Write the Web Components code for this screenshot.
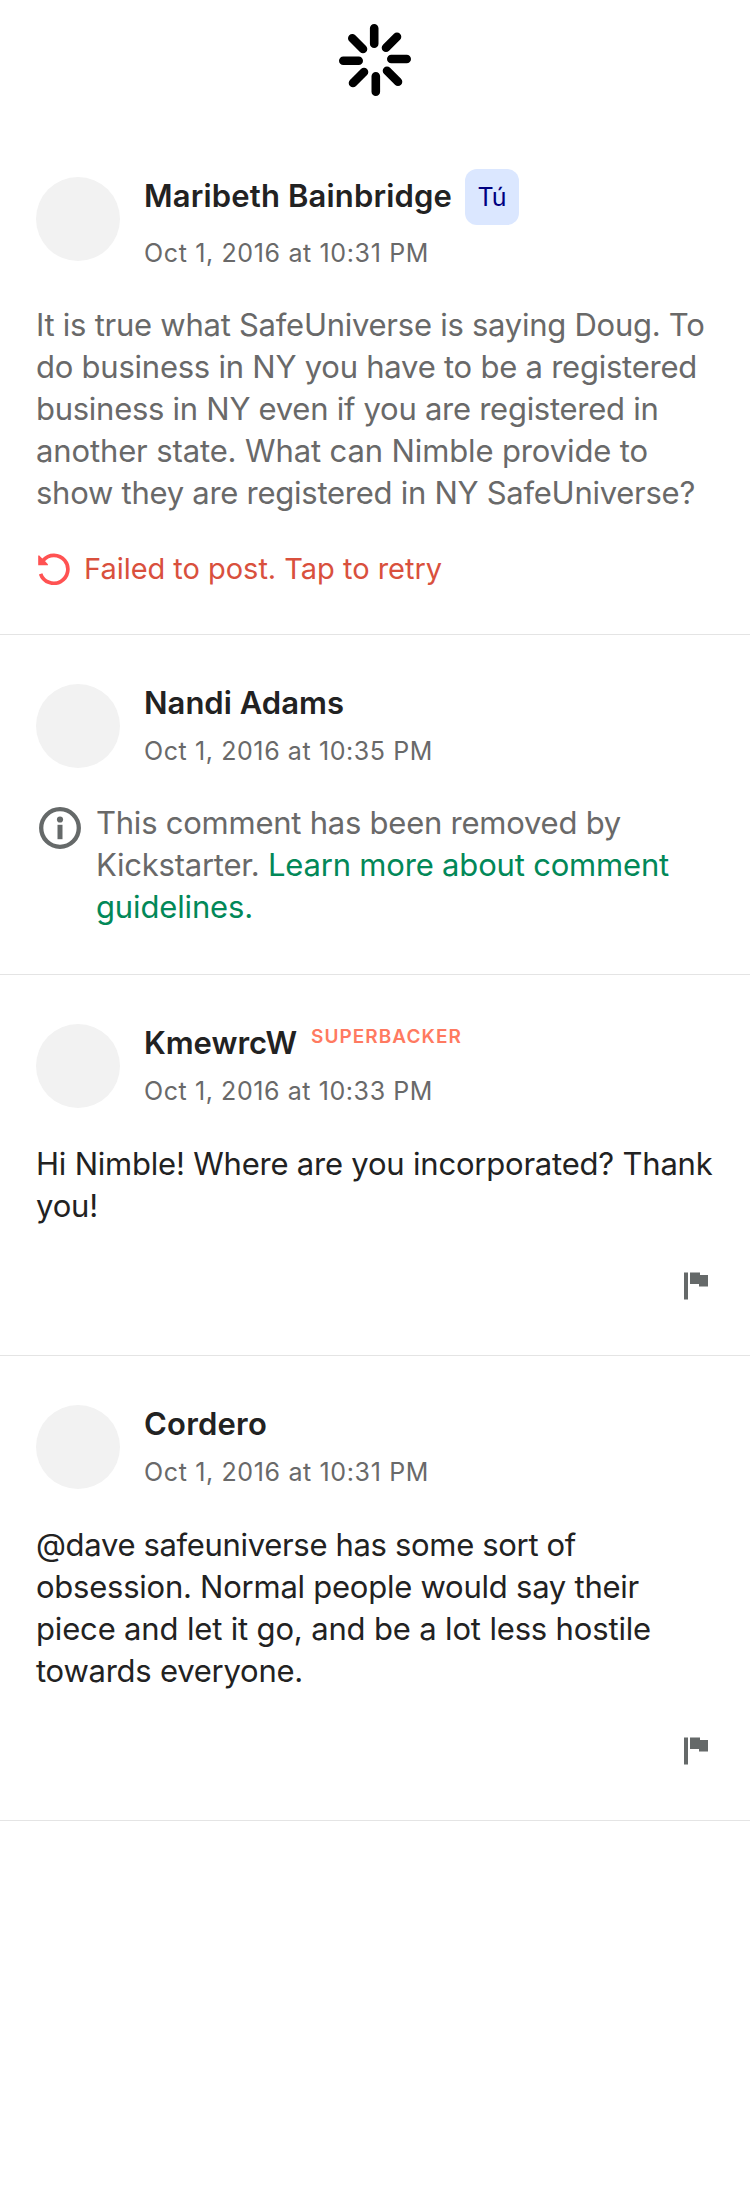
<!DOCTYPE html>
<html lang="en"><head><meta charset="utf-8"><title>Comments</title>
<style>
html,body{margin:0;background:#fff}
body{width:750px;min-height:2200px;font-family:Inter,"Liberation Sans",sans-serif;color:#222}
</style></head><body>
<comment-list></comment-list>
<script>
const shadow=(el,html)=>{const t=document.createElement('template');t.innerHTML=html;const r=el.attachShadow({mode:'open'});r.append(t.content.cloneNode(true));return r;};

// One line of text whose tracking is set so that it fills the advance in its "w" attribute.
customElements.define('text-line',class extends HTMLElement{
  connectedCallback(){
    if(this.shadowRoot)return;
    const r=shadow(this,`<style>:host{display:block;white-space:pre;height:var(--lh,42px);line-height:var(--lh,42px)}span{display:inline-block}</style><span><slot></slot></span>`);
    const s=r.querySelector('span'),w=+this.getAttribute('w');
    if(w){const n=this.textContent.length;this.style.letterSpacing='0px';this.style.letterSpacing=((w-s.getBoundingClientRect().width)/n).toFixed(3)+'px';}
  }
});
customElements.define('loading-spinner',class extends HTMLElement{
  connectedCallback(){
    shadow(this,`<style>:host{display:flex;justify-content:center;height:127px}svg{display:block}</style>
    <svg width="110" height="127" viewBox="320 0 110 127" stroke="#000" stroke-width="8.6" stroke-linecap="round">
    <path d="M374.2 28.3v15.4M397 36.7 386 47.7M406.7 59H391.300M398 81.700 387 70.700M375.800 91.700V76.300M353 83 364 72M343.300 60.700H358.700M352.300 38.300 363 49"/></svg>`);
  }
});
customElements.define('user-avatar',class extends HTMLElement{
  connectedCallback(){shadow(this,`<style>:host{display:block;width:84px;height:84px;border-radius:50%;background:#f2f2f2;flex:none}</style>`);}
});
customElements.define('you-badge',class extends HTMLElement{
  connectedCallback(){shadow(this,`<style>:host{--lh:56px;display:flex;justify-content:center;box-sizing:border-box;width:54px;height:56px;margin-left:13px;border-radius:12px;background:#dbe7ff;color:#000080;font-size:25px;font-weight:400}</style><slot></slot>`);}
});
customElements.define('super-badge',class extends HTMLElement{
  connectedCallback(){shadow(this,`<style>:host{--lh:24px;display:block;margin:0 0 13px 14px;color:#ff7a61;font-size:19px;font-weight:600}</style><slot></slot>`);}
});
customElements.define('comment-icon',class extends HTMLElement{
  connectedCallback(){
    const icons={
      flag:`<svg width="24" height="28" viewBox="0 0 24 28" fill="#656969"><path d="M0 .4h4v27H0zM6 .4h10V3h8v11.500h-9V12H6z"/></svg>`,
      info:`<svg width="42" height="42" viewBox="0 0 42 42" fill="none"><circle cx="21" cy="21" r="18.800" stroke="#656969" stroke-width="4.300"/><circle cx="21" cy="12.500" r="3.100" fill="#656969"/><path d="M18.500 17.800h5v14.400h-5z" fill="#656969"/></svg>`,
      retry:`<svg width="32" height="32" viewBox="0 0 32 32" fill="none"><path d="M5.200 7.200A14 14 0 1 1 2.600 20.800" stroke="#ff5252" stroke-width="3.700"/><path d="M.2 2.600V12.200H9.900V11.200L7.600 8.800 4 5.200 1.300 2.600z" fill="#ff5252"/></svg>`
    };
    shadow(this,`<style>:host{display:block;flex:none}svg{display:block}</style>${icons[this.getAttribute('name')]}`);
  }
});
customElements.define('comment-card',class extends HTMLElement{
  connectedCallback(){
    shadow(this,`<style>
    :host{display:flex;flex-direction:column;box-sizing:border-box;border-bottom:1px solid #e4e4e4;padding:50px 36px 0}
    header{display:flex;gap:24px}
    .who{display:flex;flex-direction:column}
    .name{display:flex;align-items:center;height:56px;margin-top:-8px;font-size:31px;font-weight:600}
    .date{--lh:36px;font-size:25px;color:#696969;margin-top:10px}
    :host(:not([compact])) slot[name=name]::slotted(*){margin-bottom:2px}
    :host([compact]){padding-top:49px}
    :host([compact]) .name{height:42px;margin-top:-2px}
    :host([compact]) .date{margin-top:9px}
    .body{font-size:31px;margin-top:34px}
    :host([muted]) .body{color:#696969;margin-top:33px}
    .foot{flex:none}
    </style>
    <header><user-avatar></user-avatar><div class="who"><div class="name"><slot name="name"></slot><slot name="badge"></slot></div><div class="date"><slot name="date"></slot></div></div></header>
    <div class="body"><slot></slot></div><div class="foot"><slot name="foot"></slot></div>`);
  }
});
customElements.define('retry-row',class extends HTMLElement{
  connectedCallback(){shadow(this,`<style>:host{display:flex;align-items:center;gap:14px;margin:34px 0 0 2px;height:42px;color:#d9503d;font-size:29px}</style><comment-icon name="retry"></comment-icon><slot></slot>`);}
});
customElements.define('removed-note',class extends HTMLElement{
  connectedCallback(){shadow(this,`<style>:host{display:flex;margin-left:3px;gap:15px}comment-icon{margin-top:5px}</style><comment-icon name="info"></comment-icon><div><slot></slot></div>`);}
});
customElements.define('flag-row',class extends HTMLElement{
  connectedCallback(){shadow(this,`<style>:host{display:flex;justify-content:flex-end;margin:45px 6px 0 0}</style><comment-icon name="flag"></comment-icon>`);}
});
customElements.define('comment-list',class extends HTMLElement{
  connectedCallback(){shadow(this,`<style>
  :host{display:flex;flex-direction:column}
  .a{height:508px}.b{height:340px}.c{height:381px}.d{height:465px}
  .green{color:#028858}
  .split{display:flex}
  </style>
  <loading-spinner></loading-spinner>
  <comment-card class="a" muted>
    <text-line slot="name" w="308">Maribeth Bainbridge</text-line><you-badge slot="badge"><text-line w="29">Tú</text-line></you-badge>
    <text-line slot="date" w="285">Oct 1, 2016 at 10:31 PM</text-line>
    <text-line w="668.5">It is true what SafeUniverse is saying Doug. To</text-line>
    <text-line w="661">do business in NY you have to be a registered</text-line>
    <text-line w="622.5">business in NY even if you are registered in</text-line>
    <text-line w="612">another state. What can Nimble provide to</text-line>
    <text-line w="659">show they are registered in NY SafeUniverse?</text-line>
    <retry-row slot="foot"><text-line w="358">Failed to post. Tap to retry</text-line></retry-row>
  </comment-card>
  <comment-card class="b" muted compact>
    <text-line slot="name" w="200">Nandi Adams</text-line>
    <text-line slot="date" w="289">Oct 1, 2016 at 10:35 PM</text-line>
    <removed-note><text-line w="525">This comment has been removed by</text-line>
    <div class="split"><text-line w="172">Kickstarter. </text-line><text-line class="green" w="401">Learn more about comment</text-line></div>
    <text-line class="green" w="157">guidelines.</text-line></removed-note>
  </comment-card>
  <comment-card class="c" compact>
    <text-line slot="name" w="153">KmewrcW</text-line><super-badge slot="badge"><text-line w="151">SUPERBACKER</text-line></super-badge>
    <text-line slot="date" w="289">Oct 1, 2016 at 10:33 PM</text-line>
    <text-line w="676.5">Hi Nimble! Where are you incorporated? Thank</text-line>
    <text-line w="62">you!</text-line>
    <flag-row slot="foot"></flag-row>
  </comment-card>
  <comment-card class="d" compact>
    <text-line slot="name" w="123">Cordero</text-line>
    <text-line slot="date" w="285">Oct 1, 2016 at 10:31 PM</text-line>
    <text-line w="540">@dave safeuniverse has some sort of</text-line>
    <text-line w="603">obsession. Normal people would say their</text-line>
    <text-line w="615">piece and let it go, and be a lot less hostile</text-line>
    <text-line w="267">towards everyone.</text-line>
    <flag-row slot="foot"></flag-row>
  </comment-card>`);}
});
</script>
</body></html>
